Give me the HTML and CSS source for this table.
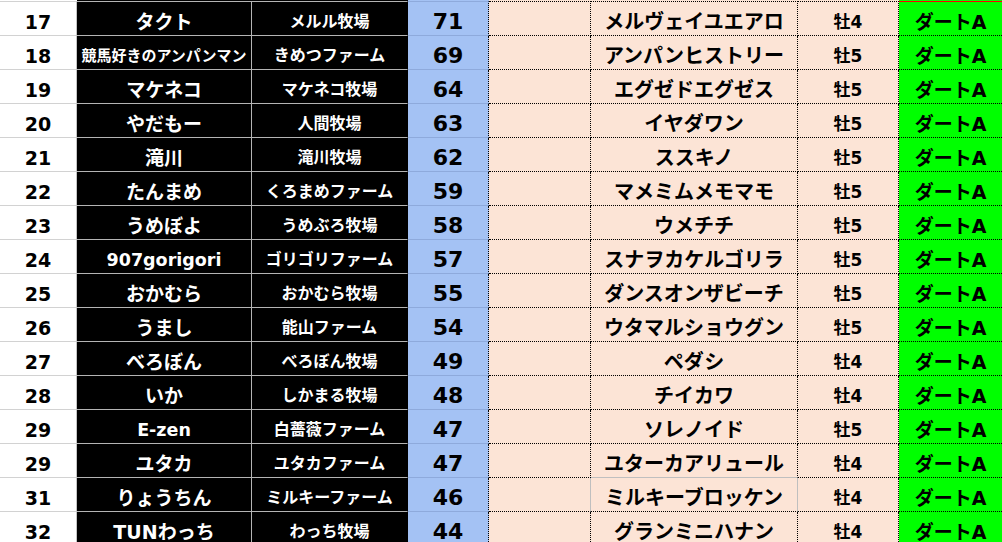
FILE: index.html
```html
<!DOCTYPE html>
<html lang="ja">
<head>
<meta charset="utf-8">
<title>ランキング</title>
<link rel="stylesheet" href="styles.css">
</head>
<body>
<div class="sheet">
  <div class="row edge">
    <div class="c rank"></div><div class="c name"></div><div class="c farm"></div><div class="c pt"></div><div class="c blank"></div><div class="c horse"></div><div class="c sex"></div><div class="c cls"></div>
  </div>
  <div class="row first">
    <div class="c rank">17</div><div class="c name">タクト</div><div class="c farm">メルル牧場</div><div class="c pt">71</div><div class="c blank"></div><div class="c horse">メルヴェイユエアロ</div><div class="c sex">牡4</div><div class="c cls">ダートA</div>
  </div>
  <div class="row">
    <div class="c rank">18</div><div class="c name small">競馬好きのアンパンマン</div><div class="c farm">きめつファーム</div><div class="c pt">69</div><div class="c blank"></div><div class="c horse">アンパンヒストリー</div><div class="c sex">牡5</div><div class="c cls">ダートA</div>
  </div>
  <div class="row">
    <div class="c rank">19</div><div class="c name">マケネコ</div><div class="c farm">マケネコ牧場</div><div class="c pt">64</div><div class="c blank"></div><div class="c horse">エグゼドエグゼス</div><div class="c sex">牡5</div><div class="c cls">ダートA</div>
  </div>
  <div class="row">
    <div class="c rank">20</div><div class="c name">やだもー</div><div class="c farm">人間牧場</div><div class="c pt">63</div><div class="c blank"></div><div class="c horse">イヤダワン</div><div class="c sex">牡5</div><div class="c cls">ダートA</div>
  </div>
  <div class="row">
    <div class="c rank">21</div><div class="c name">滝川</div><div class="c farm">滝川牧場</div><div class="c pt">62</div><div class="c blank"></div><div class="c horse">ススキノ</div><div class="c sex">牡5</div><div class="c cls">ダートA</div>
  </div>
  <div class="row">
    <div class="c rank">22</div><div class="c name">たんまめ</div><div class="c farm">くろまめファーム</div><div class="c pt">59</div><div class="c blank"></div><div class="c horse">マメミムメモマモ</div><div class="c sex">牡5</div><div class="c cls">ダートA</div>
  </div>
  <div class="row">
    <div class="c rank">23</div><div class="c name">うめぼよ</div><div class="c farm">うめぶろ牧場</div><div class="c pt">58</div><div class="c blank"></div><div class="c horse">ウメチチ</div><div class="c sex">牡5</div><div class="c cls">ダートA</div>
  </div>
  <div class="row">
    <div class="c rank">24</div><div class="c name latin">907gorigori</div><div class="c farm">ゴリゴリファーム</div><div class="c pt">57</div><div class="c blank"></div><div class="c horse">スナヲカケルゴリラ</div><div class="c sex">牡5</div><div class="c cls">ダートA</div>
  </div>
  <div class="row">
    <div class="c rank">25</div><div class="c name">おかむら</div><div class="c farm">おかむら牧場</div><div class="c pt">55</div><div class="c blank"></div><div class="c horse">ダンスオンザビーチ</div><div class="c sex">牡5</div><div class="c cls">ダートA</div>
  </div>
  <div class="row">
    <div class="c rank">26</div><div class="c name">うまし</div><div class="c farm">能山ファーム</div><div class="c pt">54</div><div class="c blank"></div><div class="c horse">ウタマルショウグン</div><div class="c sex">牡5</div><div class="c cls">ダートA</div>
  </div>
  <div class="row">
    <div class="c rank">27</div><div class="c name">べろぼん</div><div class="c farm">べろぼん牧場</div><div class="c pt">49</div><div class="c blank"></div><div class="c horse">ペダシ</div><div class="c sex">牡4</div><div class="c cls">ダートA</div>
  </div>
  <div class="row">
    <div class="c rank">28</div><div class="c name">いか</div><div class="c farm">しかまる牧場</div><div class="c pt">48</div><div class="c blank"></div><div class="c horse">チイカワ</div><div class="c sex">牡4</div><div class="c cls">ダートA</div>
  </div>
  <div class="row">
    <div class="c rank">29</div><div class="c name latin">E-zen</div><div class="c farm">白薔薇ファーム</div><div class="c pt">47</div><div class="c blank"></div><div class="c horse">ソレノイド</div><div class="c sex">牡5</div><div class="c cls">ダートA</div>
  </div>
  <div class="row">
    <div class="c rank">29</div><div class="c name">ユタカ</div><div class="c farm">ユタカファーム</div><div class="c pt">47</div><div class="c blank"></div><div class="c horse above-sel">ユターカアリュール</div><div class="c sex">牡4</div><div class="c cls">ダートA</div>
  </div>
  <div class="row">
    <div class="c rank">31</div><div class="c name">りょうちん</div><div class="c farm">ミルキーファーム</div><div class="c pt">46</div><div class="c blank left-of-sel"></div><div class="c horse sel">ミルキーブロッケン</div><div class="c sex">牡4</div><div class="c cls">ダートA</div>
  </div>
  <div class="row">
    <div class="c rank">32</div><div class="c name">TUNわっち</div><div class="c farm">わっち牧場</div><div class="c pt">44</div><div class="c blank"></div><div class="c horse">グランミニハナン</div><div class="c sex">牡4</div><div class="c cls">ダートA</div>
  </div>
</div>
</body>
</html>
```

FILE: styles.css
```css
html, body {
  margin: 0;
  padding: 0;
  background: #ffffff;
}

body {
  width: 1002px;
  height: 542px;
  overflow: hidden;
  font-family: "DejaVu Sans", "Noto Sans CJK JP", sans-serif;
  font-weight: bold;
}

.sheet {
  display: flex;
  flex-direction: column;
}

.row {
  display: grid;
  grid-template-columns: 77px 175px 156px 81px 102px 207px 101px 103px;
  height: 34px;
}

.row.edge {
  height: 1px;
}

.row.first {
  height: 35px;
}

.c {
  box-sizing: border-box;
  display: flex;
  align-items: center;
  justify-content: center;
  padding-top: 7px;
  white-space: nowrap;
  overflow: hidden;
  line-height: 24px;
  border-right: 1px solid transparent;
  border-bottom: 1px solid transparent;
}

.edge .c {
  border: 0;
  padding: 0;
}

.rank {
  background: #ffffff;
  color: #000000;
  font-size: 19px;
  border-right-color: #c4c4c4;
  border-bottom-color: #d2d2d2;
}

.name,
.farm {
  background: #000000;
  color: #ffffff;
  border-bottom-color: #b4b4b4;
}

.name {
  font-size: 19px;
  border-right-color: #b4b4b4;
}

.name.small {
  font-size: 15px;
}

.name.latin {
  font-size: 17.5px;
}

.farm {
  font-size: 16px;
  border-right-color: #000000;
}

.pt {
  background: #a4c2f4;
  color: #000000;
  font-size: 22px;
  border-right: 1px dotted #000000;
  border-bottom-color: #8eaadc;
}

.blank,
.horse,
.sex {
  background: #fce4d6;
  color: #000000;
  border-right: 1px dotted #000000;
  border-bottom: 1px dotted #000000;
}

.horse {
  font-size: 20px;
}

.sex {
  font-size: 17px;
}

.cls {
  background: #00ff00;
  color: #000000;
  font-size: 19px;
  border-bottom: 1px dotted #000000;
  border-right: 0;
}

.first .c {
  border-top: 1px solid #d2d2d2;
}

.first .name,
.first .farm {
  border-top-color: #b4b4b4;
}

.first .pt {
  border-top-color: #8eaadc;
}

.first .blank,
.first .horse,
.first .sex {
  border-top: 1px dotted #000000;
}

.first .cls {
  border-top: 1px solid #ff0000;
}

.above-sel {
  border-bottom: 1px solid #bfbfbf;
}

.left-of-sel {
  border-right: 1px solid #bfbfbf;
}

.sel {
  border-right: 1px solid #bfbfbf;
}
```
